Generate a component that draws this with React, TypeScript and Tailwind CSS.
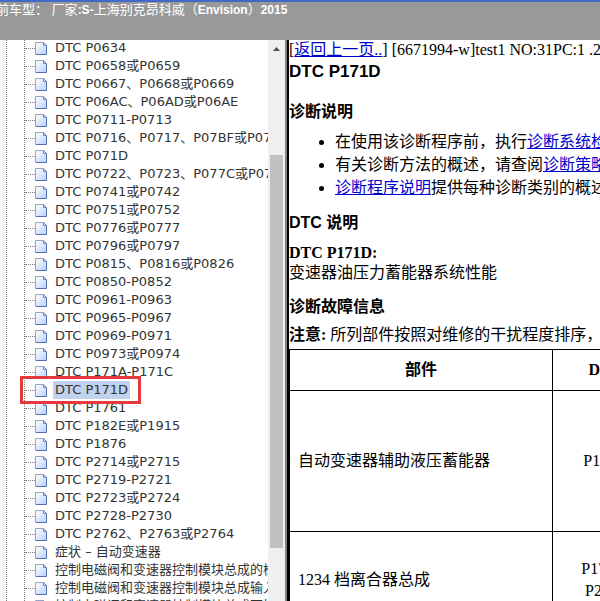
import React from "react";
import { clsx } from "clsx";

const treeItems = [
  "DTC P0634",
  "DTC P0658或P0659",
  "DTC P0667、P0668或P0669",
  "DTC P06AC、P06AD或P06AE",
  "DTC P0711-P0713",
  "DTC P0716、P0717、P07BF或P07C0",
  "DTC P071D",
  "DTC P0722、P0723、P077C或P077D",
  "DTC P0741或P0742",
  "DTC P0751或P0752",
  "DTC P0776或P0777",
  "DTC P0796或P0797",
  "DTC P0815、P0816或P0826",
  "DTC P0850-P0852",
  "DTC P0961-P0963",
  "DTC P0965-P0967",
  "DTC P0969-P0971",
  "DTC P0973或P0974",
  "DTC P171A-P171C",
  "DTC P171D",
  "DTC P1761",
  "DTC P182E或P1915",
  "DTC P1876",
  "DTC P2714或P2715",
  "DTC P2719-P2721",
  "DTC P2723或P2724",
  "DTC P2728-P2730",
  "DTC P2762、P2763或P2764",
  "症状 – 自动变速器",
  "控制电磁阀和变速器控制模块总成的检查",
  "控制电磁阀和变速器控制模块总成输入",
  "控制电磁阀和变速器控制模块总成更换",
];

const selectedItem = "DTC P171D";

const PageIcon = () => {
  return (
    <svg width="12" height="13" viewBox="0 0 12 13" className="shrink-0">
      <defs>
        <linearGradient id="page" x1="0" y1="0" x2="1" y2="1">
          <stop offset="0" stopColor="#ffffff" />
          <stop offset="0.4" stopColor="#e4eefc" />
          <stop offset="1" stopColor="#b4cff6" />
        </linearGradient>
      </defs>
      <path d="M0.5 0.5H8.5L11.5 3.5V12.5H0.5Z" fill="url(#page)" />
      <path d="M0.5 12V0.5H8.5" fill="none" stroke="#93a3c6" />
      <path d="M11.5 3.5V12.5H0.5" fill="none" stroke="#566fae" />
      <path d="M8.5 0.5V3.5H11.5Z" fill="#d5e2f7" stroke="#7488b8" />
    </svg>
  );
};

interface TreeItemProps {
  children: React.ReactNode;
  isSelected?: boolean;
}

const TreeItem = ({ children, isSelected }: TreeItemProps) => {
  return (
    <li className="relative flex h-[18px] items-center">
      <span className="w-2.5 shrink-0 border-t border-dotted border-[#808080]" />
      <PageIcon />
      <a
        href="#"
        className={clsx(
          "ml-1.5 px-0.5 leading-[18px] whitespace-nowrap",
          isSelected && "bg-[#c1d2ee]"
        )}
      >
        {children}
      </a>
      {isSelected && (
        <span className="pointer-events-none absolute -top-[5px] -left-[5px] z-10 h-7 w-[121px] border-3 border-[#e6393d]" />
      )}
    </li>
  );
};

const Scrollbar = () => {
  return (
    <div className="flex w-[17px] shrink-0 flex-col bg-[#f0f0f0] px-0.5">
      <div className="flex h-[115px] shrink-0 justify-center pt-[7px]">
        <svg width="7" height="4" viewBox="0 0 7 4">
          <path d="M3.5 0L7 4H0Z" fill="#505050" />
        </svg>
      </div>
      <div className="h-[70%] bg-[#c1c1c1]" />
    </div>
  );
};

const Sidebar = () => {
  return (
    <aside className="flex w-[289px] shrink-0 border-r-2 border-black">
      <div className="flex flex-1 overflow-hidden bg-white">
        <div className="w-[7px] shrink-0 border-r border-dotted border-[#808080] bg-[#f7f7f7]" />
        <ul className="-mt-px ml-[17px] h-max flex-1 border-l border-dotted border-[#808080] font-['DejaVu_Sans','Noto_Sans_CJK_SC',sans-serif] text-[13px] text-[#333333]">
          {treeItems.map((item) => (
            <TreeItem key={item} isSelected={item === selectedItem}>
              {item}
            </TreeItem>
          ))}
        </ul>
      </div>
      <Scrollbar />
      <div className="w-0.5 shrink-0 bg-[#808080]" />
    </aside>
  );
};

const DocLink = ({ children }: { children: React.ReactNode }) => {
  return (
    <a href="#" className="text-[#0000cc] underline">
      {children}
    </a>
  );
};

const headingClass =
  "font-['Liberation_Sans','Noto_Sans_CJK_SC',sans-serif] text-base leading-6 font-bold";

const Document = () => {
  return (
    <main className="min-w-0 flex-1 overflow-hidden bg-white font-['Liberation_Serif','Noto_Sans_CJK_SC',serif] text-base whitespace-nowrap text-black">
      <p className="leading-5">
        [<DocLink>返回上一页..</DocLink>] [6671994-w]test1 NO:31PC:1 .2
      </p>
      <h1 className="font-['Liberation_Sans',sans-serif] text-[17px] leading-6 font-bold">
        DTC P171D
      </h1>
      <h2 className={clsx(headingClass, "mt-4")}>诊断说明</h2>
      <ul className="mt-1.5 list-disc pl-[46px] leading-[23px]">
        <li>
          在使用该诊断程序前，执行<DocLink>诊断系统检查</DocLink>。
        </li>
        <li>
          有关诊断方法的概述，请查阅<DocLink>诊断策略</DocLink>。
        </li>
        <li>
          <DocLink>诊断程序说明</DocLink>提供每种诊断类别的概述。
        </li>
      </ul>
      <h2 className={clsx(headingClass, "mt-3")}>DTC 说明</h2>
      <p className="mt-2 leading-5 font-bold">DTC P171D:</p>
      <p className="leading-5">变速器油压力蓄能器系统性能</p>
      <h2 className={clsx(headingClass, "mt-3")}>诊断故障信息</h2>
      <p className="mt-1 leading-6">
        <b>注意:</b> 所列部件按照对维修的干扰程度排序，
      </p>
      <table className="mt-0.5 w-[369px] table-fixed border-collapse">
        <thead>
          <tr className="h-[41px]">
            <th className="w-[263px] border border-black">部件</th>
            <th className="w-[106px] border border-black">DTC</th>
          </tr>
        </thead>
        <tbody>
          <tr className="h-[141px]">
            <td className="border border-black px-2">自动变速器辅助液压蓄能器</td>
            <td className="border border-black text-center">P171D</td>
          </tr>
          <tr className="h-24">
            <td className="border border-black px-2">1234 档离合器总成</td>
            <td className="border border-black text-center leading-[22px]">
              P171D,
              <br />
              P2714
            </td>
          </tr>
        </tbody>
      </table>
    </main>
  );
};

const App = () => {
  return (
    <div className="flex h-screen flex-col overflow-hidden bg-white">
      <header className="flex h-10 shrink-0 items-start overflow-hidden border-t-2 border-[#4169c8] bg-[#999999] font-['Liberation_Sans','Noto_Sans_CJK_SC',sans-serif] text-white">
        <p className="-ml-1 text-[13px] leading-4 whitespace-nowrap">
          前车型： 厂家<b className="text-xs">:S-</b>上海别克昂科威（
          <b className="text-xs">Envision</b>）<b className="text-xs">2015</b>
        </p>
      </header>
      <div className="flex min-h-0 flex-1">
        <Sidebar />
        <Document />
      </div>
    </div>
  );
};

export default App;
